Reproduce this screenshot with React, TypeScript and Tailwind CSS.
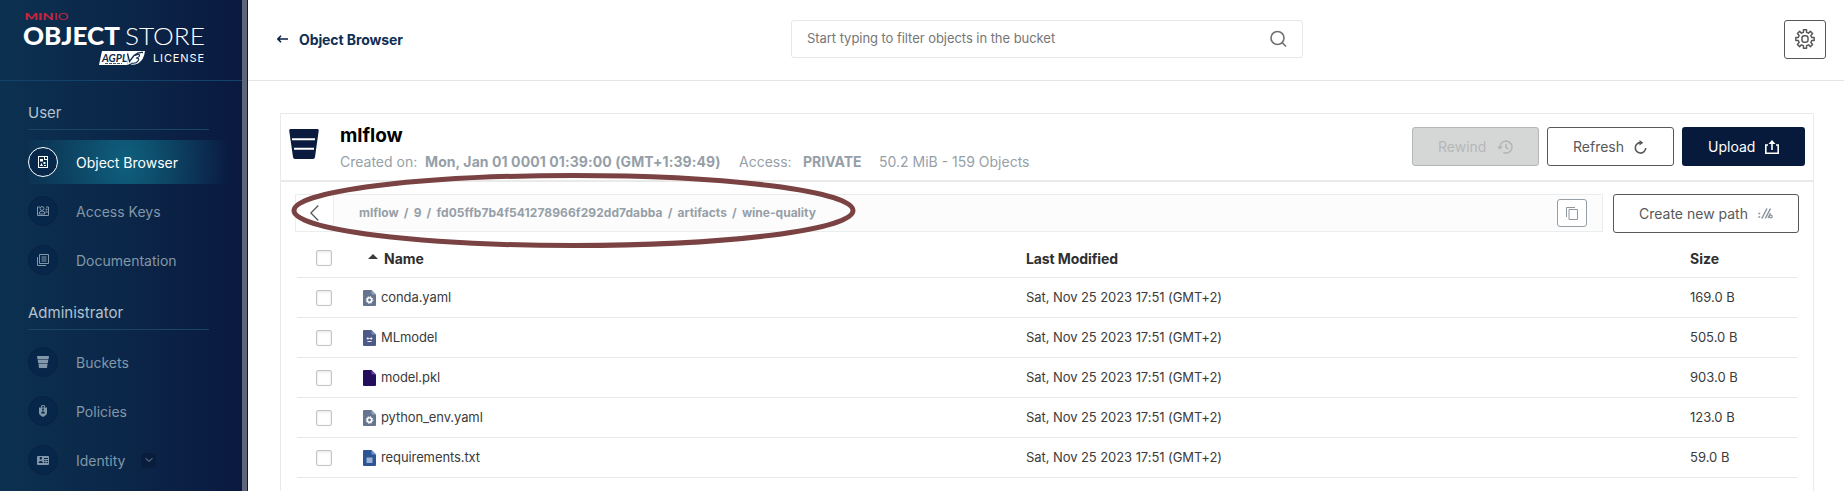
import React from "react";

const Logo = () => (
  <svg width="184" height="56" viewBox="0 0 184 56" className="block overflow-visible" fontFamily="Lato, sans-serif">
    <g fill="#c9243f">
      <text x="0.5" y="7.3" fontSize="10" fontWeight="900" textLength="29" lengthAdjust="spacingAndGlyphs">MIN</text>
      <text x="30" y="7.3" fontSize="10" fontWeight="400" textLength="14.500" lengthAdjust="spacingAndGlyphs">IO</text>
    </g>
    <g fill="#fff">
      <text x="-1" y="32" fontSize="24" fontWeight="900" textLength="97" lengthAdjust="spacingAndGlyphs">OBJECT</text>
      <text x="101" y="32" fontSize="24" fontWeight="300" textLength="80" lengthAdjust="spacingAndGlyphs">STORE</text>
      <path d="M78 38H104L103.500 52H75Z" />
      <path d="M104 38H121q-1 9-7 12.500q-3 1.500-7 1.300l1.500-2.300L103.500 52Z" />
      <text x="129" y="49" fontSize="11" fontFamily="Inter, sans-serif" textLength="51">LICENSE</text>
    </g>
    <text x="78" y="48.5" fontSize="11" fontStyle="italic" fontWeight="700" fill="#0c2a4b" textLength="25" lengthAdjust="spacingAndGlyphs">AGPL</text>
    <g fill="none" stroke="#0c2a4b">
      <path d="M103.500 40.500 105.500 48.500 110 42.500Q114 39 119 39.500" strokeWidth="1.300" />
      <path d="M111 42.500q6-2.500 4 1q-1 1.500-3 1.500q4 0 2 3t-6.500 2" strokeWidth="1.200" />
      <path d="M81 50.500h17" strokeWidth="0.800" strokeDasharray="3 1" />
    </g>
  </svg>
);

const BrowserIcon = () => (
  <svg width="12" height="12" viewBox="0 0 12 12" fill="currentColor">
    <path fillRule="evenodd" d="M1 0h10v12H1ZM2 1v10h8V4H7V1ZM8 1v2h2V1Z" />
    <path d="M3 3h3v2.500H3ZM6.500 6h2v2h-2ZM3 10l1.500-3L6 10ZM7 9h2v1H7Z" />
  </svg>
);
const KeysIcon = () => (
  <svg width="12" height="12" viewBox="0 0 12 12" fill="none" stroke="currentColor">
    <path d="M3 2H.5v8.500h11V2H9" />
    <circle cx="5" cy="3.500" r="1.900" />
    <path d="M2 9q0-3 3-3t3 3Z" />
    <path d="M8.500 4.500h2M8.500 7h2" strokeWidth="1.500" />
  </svg>
);
const DocsIcon = () => (
  <svg width="12" height="12" viewBox="0 0 12 12" fill="none" stroke="currentColor">
    <path d="M2.500.5h9v9h-9ZM.5 3v8.500H9M4.500 3h5M4.500 5h5M4.500 7h5" />
  </svg>
);
const BucketSmallIcon = () => (
  <svg width="12" height="12" viewBox="0 0 12 12" fill="currentColor">
    <path d="M0 0h12l-.4 3H.4ZM.8 4h10.400l-.4 3H1.200ZM1.500 8h9l-.5 4H2Z" />
    <path d="M.5 3h11l-1 5h-9Z" opacity=".45" />
  </svg>
);
const PoliciesIcon = () => (
  <svg width="12" height="12" viewBox="0 0 12 12" fill="currentColor">
    <path fillRule="evenodd" d="M2 2.500h8v5.500q0 2-4 4q-4-2-4-4ZM5.200 3.500v2h1.600v-2ZM4 8.500h4l-1-2H5Z" />
    <path d="M4.500 2.500V.7h3v1.800" fill="none" stroke="currentColor" />
  </svg>
);
const IdentityIcon = () => (
  <svg width="12" height="12" viewBox="0 0 12 12" fill="currentColor">
    <path fillRule="evenodd" d="M1 2h10q1 0 1 1v7q0 1-1 1H1q-1 0-1-1V3q0-1 1-1ZM2.800 3v2.500h2V3ZM1.500 9h4.500q0-2-2.200-2T1.500 9ZM7 4v1h4V4ZM7 6v1h1.500V6ZM9.500 6v1H11V6ZM7 8v1h1.500V8ZM9.500 8v1H11V8Z" />
  </svg>
);

type NavItem = { label: string; icon: React.ReactNode; active?: boolean; expandable?: boolean };

const userItems: NavItem[] = [
  { label: "Object Browser", icon: <BrowserIcon />, active: true },
  { label: "Access Keys", icon: <KeysIcon /> },
  { label: "Documentation", icon: <DocsIcon /> },
];
const adminItems: NavItem[] = [
  { label: "Buckets", icon: <BucketSmallIcon /> },
  { label: "Policies", icon: <PoliciesIcon /> },
  { label: "Identity", icon: <IdentityIcon />, expandable: true },
];

const NavGroup = ({ title, items }: { title: string; items: NavItem[] }) => (
  <div>
    <div className="mr-[33px] ml-7 flex h-[27px] items-start border-b border-[#194466] text-[15px] leading-5 text-[#b3c3cf]">
      {title}
    </div>
    <div className="flex flex-col gap-[5px] pt-[10px]">
      {items.map((item) => (
        <div
          key={item.label}
          className={
            item.active
              ? "mr-2 ml-7 flex h-11 items-center bg-[radial-gradient(ellipse_104px_140px_at_97px_22px,#0f607e_0%,#0f607e00_100%)] text-white"
              : "mr-2 ml-7 flex h-11 items-center text-[#8297a8]"
          }
        >
          <span
            className={
              item.active
                ? "flex size-[30px] items-center justify-center rounded-full border border-white bg-[#07274b]"
                : "flex size-[30px] items-center justify-center rounded-full border border-[#08233f] bg-[#06264a]"
            }
          >
            {item.icon}
          </span>
          <span className="ml-[18px] pt-px text-[14px]">{item.label}</span>
          {item.expandable && (
            <span className="ml-4 flex size-[15px] items-center justify-center rounded-sm bg-[#0a1d3d]">
              <svg width="8" height="6" viewBox="0 0 8 6" fill="none" stroke="currentColor">
                <path d="M.7 1.200 4 4.500l3.300-3.300" />
              </svg>
            </span>
          )}
        </div>
      ))}
    </div>
  </div>
);

const Sidebar = () => (
  <aside className="flex w-[248px] shrink-0 border-r border-[#081c42] bg-[#0b1b40]">
    <div className="w-[242px] bg-[linear-gradient(90deg,#0c3150_0%,#0b2648_52%,#0a193f_100%)]">
      <div className="h-[81px] border-b border-[#13436b] pt-[13px] pl-6">
        <Logo />
      </div>
      <div className="flex flex-col gap-[21px] pt-[22px]">
        <NavGroup title="User" items={userItems} />
        <NavGroup title="Administrator" items={adminItems} />
      </div>
    </div>
    <div className="w-[5px] bg-[#5e657a]" />
  </aside>
);

const SearchIcon = () => (
  <svg width="17" height="18" viewBox="0 0 17 18" fill="none" stroke="#707070" strokeWidth="1.600">
    <circle cx="7.500" cy="8" r="6.500" />
    <path d="m12 12.500 4 4" />
  </svg>
);

const GearIcon = () => (
  <svg width="22" height="22" viewBox="0 0 24 24" fill="none" stroke="#585858" strokeWidth="1.600" strokeLinejoin="round">
    <path d="M10.300 2h3.400v2.700l2.200.9 2-1.900 2.400 2.400-1.900 2 .9 2.200H22v3.400h-2.700l-.9 2.200 1.900 2-2.400 2.400-2-1.900-2.200.9V22h-3.400v-2.700l-2.200-.9-2 1.900-2.400-2.400 1.900-2-.9-2.200H2v-3.400h2.700l.9-2.200-1.900-2 2.400-2.400 2 1.900 2.200-.9Z" />
    <rect x="8.700" y="8.500" width="6.600" height="7" rx="2.500" />
  </svg>
);

const Header = () => (
  <header className="flex h-[81px] shrink-0 items-center border-b border-[#e5e5e5] pr-[18px] pl-[29px]">
    <div className="mb-[2px] flex w-[514px] items-center">
      <svg width="11" height="8" viewBox="0 0 11 8" fill="none" stroke="#081c42" strokeWidth="1.500">
        <path d="M11 4H1.500M4 .8.900 4 4 7.200" />
      </svg>
      <span className="ml-[11px] text-[14px] font-bold tracking-[-0.1px] text-[#0f2f55]">Object Browser</span>
    </div>
    <div className="mb-[2px] flex h-[38px] w-[512px] items-center justify-between rounded-[3px] border border-[#e5e8e8] pr-[15px] pl-[15px] text-[13px] tracking-[-0.05px] text-[#767676]">
      <span>Start typing to filter objects in the bucket</span>
      <SearchIcon />
    </div>
    <button className="mb-[2px] ml-auto flex h-[39px] w-[42px] items-center justify-center rounded-[3px] border border-[#585858]">
      <GearIcon />
    </button>
  </header>
);

const BucketIcon = () => (
  <svg width="30" height="30" viewBox="0 0 30 30">
    <path d="M1.500 0h27q1.500 0 1.200 1.700L26 28q-.3 2-2 2H6q-1.700 0-2-2L.2 1.700Q0 0 1.500 0Z" fill="#0a1b3f" />
    <path d="M3 10.300h23M5 19.800h20" stroke="#fff" strokeWidth="2" />
  </svg>
);
const RewindIcon = () => (
  <svg width="16" height="14" viewBox="0 0 16 14" fill="none" stroke="currentColor" strokeWidth="1.600">
    <path d="M3 7.500A6 6 0 1 1 6.200 12.400M9 4v3.500l2.500 1.500" />
    <path d="M0 6.500h6L3 9.700Z" fill="currentColor" stroke="none" />
  </svg>
);
const RefreshIcon = () => (
  <svg width="13" height="14" viewBox="0 0 13 14" fill="none" stroke="currentColor" strokeWidth="1.600">
    <path d="M7 2.700A5.200 5.200 0 1 0 11.700 8" />
    <path d="M5.500 0 9.300 2.800 5.500 5.600Z" fill="currentColor" stroke="none" />
  </svg>
);
const UploadIcon = () => (
  <svg width="14" height="14" viewBox="0 0 14 14" fill="none" stroke="currentColor" strokeWidth="1.600">
    <path d="M3 5H.8v8.200h12.400V5H11M7 10V2" />
    <path d="M3.500 4 7 0l3.500 4Z" fill="currentColor" stroke="none" />
  </svg>
);
const PathIcon = () => (
  <svg width="15" height="11" viewBox="0 0 15 11" fill="none" stroke="#8b949c" strokeWidth="1.500">
    <path d="M.3 5.500h1.900M.3 9h1.900M3.800 10.500 9 .5M7.300 10.500 12.500 .5" />
    <path d="M10 10 12.500 5" strokeWidth="1.200" />
    <circle cx="12.800" cy="8.500" r="1.400" strokeWidth="1.200" />
  </svg>
);
const CopyIcon = () => (
  <svg width="12" height="13" viewBox="0 0 12 13" fill="none" stroke="#8f979f">
    <path d="M.5 10V.5H9M3 2.500h8.500v10H3Z" />
  </svg>
);

const FileIcon = ({ kind }: { kind: string }) => {
  const fill = kind === "yaml" ? "#65758f" : kind === "model" ? "#4d5a87" : kind === "pkl" ? "#230f5c" : "#2c5594";
  const fold = kind === "yaml" ? "#8fa4bd" : kind === "model" ? "#7c8bc2" : kind === "pkl" ? "#6845a5" : "#6f98d3";
  return (
    <svg width="13" height="16" viewBox="0 0 13 16">
      <path d="M1 0h7.500L13 4.500V15q0 1-1 1H1q-1 0-1-1V1q0-1 1-1Z" fill={fill} />
      <path d="M8.500 0 13 4.500H9.500q-1 0-1-1Z" fill={fold} />
      {kind === "yaml" && (
        <g stroke="#fff" fill="none">
          <circle cx="6.500" cy="10" r="2.200" strokeWidth="1.600" />
          <circle cx="6.500" cy="10" r="3.400" strokeWidth="1" strokeDasharray="1.400 1.270" />
        </g>
      )}
      {kind === "model" && (
        <path d="M4 7.500h1.500v2H4ZM7.500 7.500H9v2H7.500ZM3.500 8h6v.8h-6ZM4.500 11h4v1h-4Z" fill="#fff" opacity=".9" />
      )}
      {kind === "txt" && <path d="M3.500 7.500h6V13h-6Z" fill="#9bb1d5" />}
    </svg>
  );
};

const Checkbox = () => (
  <span className="block size-4 rounded-[2px] border border-[#c3c3c3] bg-white shadow-[inset_0_1px_3px_#0000001a]" />
);

const files = [
  { name: "conda.yaml", kind: "yaml", size: "169.0 B" },
  { name: "MLmodel", kind: "model", size: "505.0 B" },
  { name: "model.pkl", kind: "pkl", size: "903.0 B" },
  { name: "python_env.yaml", kind: "yaml", size: "123.0 B" },
  { name: "requirements.txt", kind: "txt", size: "59.0 B" },
];

const crumbs = ["mlflow", "9", "fd05ffb7b4f541278966f292dd7dabba", "artifacts", "wine-quality"];

const BucketHeader = () => (
  <div className="flex h-[68px] items-start border-b-2 border-[#eaeaea] pr-2 pl-2">
    <div className="pt-[15px]">
      <BucketIcon />
    </div>
    <div className="ml-[21px] flex flex-col pt-2">
      <h1 className="h-[30px] text-[19px] leading-[27px] font-bold text-black">mlflow</h1>
      <div className="flex h-5 items-center text-[14px] leading-5 whitespace-nowrap text-[#969fa8]">
        <span className="w-[85px]">Created on:</span>
        <b className="w-[314px] tracking-[0.09px]">Mon, Jan 01 0001 01:39:00 (GMT+1:39:49)</b>
        <span className="w-[64px]">Access:</span>
        <b className="w-[76px]">PRIVATE</b>
        <span>50.2 MiB - 159 Objects</span>
      </div>
    </div>
    <div className="ml-auto flex gap-2 pt-[13px] text-[14px]">
      <button className="flex h-[39px] w-[127px] items-center justify-between rounded-[3px] border border-[#b5b6b6] bg-[#d5d7d7] pr-[25px] pl-[25px] text-[#b5b7b7]">
        Rewind <RewindIcon />
      </button>
      <button className="flex h-[39px] w-[127px] items-center justify-between rounded-[3px] border border-[#585858] pr-[26px] pl-[25px] text-[#585858]">
        Refresh <RefreshIcon />
      </button>
      <button className="flex h-[39px] w-[123px] items-center justify-between rounded-[3px] bg-[#081a3c] pr-[26px] pl-[26px] text-white">
        Upload <UploadIcon />
      </button>
    </div>
  </div>
);

const PathBar = () => (
  <div className="flex pt-3 pr-[14px] pl-[14px]">
    <div className="flex h-[38px] w-[1308px] items-center border border-[#eaedee] bg-[#fcfcfc]">
      <span className="flex h-full w-[38px] items-center justify-center border-r border-[#eaedee] bg-white">
        <svg width="9" height="16" viewBox="0 0 9 16" fill="none" stroke="#585858" strokeWidth="1.300">
          <path d="M8.300.5.900 8l7.400 7.500" />
        </svg>
      </span>
      <div className="ml-[25px] flex text-[12px] font-bold text-[#969fa8]">
        {crumbs.map((c, i) => (
          <React.Fragment key={c}>
            {i > 0 && <span className="w-[15px] text-center">/</span>}
            <span className={c.length > 20 ? "tracking-[0.07px]" : ""}>{c}</span>
          </React.Fragment>
        ))}
      </div>
      <button className="mr-[15px] ml-auto flex h-7 w-[30px] items-center justify-center rounded-[3px] border border-[#969fa8] bg-white">
        <CopyIcon />
      </button>
    </div>
    <button className="ml-[10px] flex h-[39px] w-[186px] items-center justify-between rounded-[3px] border border-[#585858] pr-[25px] pl-[25px] text-[14px] text-[#585858]">
      Create new path <PathIcon />
    </button>
  </div>
);

const FileTable = () => (
  <div className="mr-4 ml-4 text-[#3b3b3b]">
    <div className="flex h-[45px] items-center border-b border-[#e7e9e9] pt-[6px] text-[14px] font-bold text-[#2f2f2f]">
      <div className="w-[71px] pl-[19px]"><Checkbox /></div>
      <div className="flex w-[658px] items-center gap-[6px]">
        <svg width="10" height="5" viewBox="0 0 10 5" className="mb-[3px]"><path d="M0 5 5 0l5 5Z" fill="#3b3b3b" /></svg>
        Name
      </div>
      <div className="w-[664px] tracking-[-0.1px]">Last Modified</div>
      <div>Size</div>
    </div>
    {files.map((f) => (
      <div key={f.name} className="flex h-10 items-center border-b border-[#e7e9e9] text-[13px]">
        <div className="w-[66px] pl-[19px]"><Checkbox /></div>
        <div className="flex w-[663px] items-center gap-[5px] tracking-[-0.1px]">
          <FileIcon kind={f.kind} />
          {f.name}
        </div>
        <div className="w-[664px] tracking-[-0.07px]">Sat, Nov 25 2023 17:51 (GMT+2)</div>
        <div>{f.size}</div>
      </div>
    ))}
  </div>
);

export default function App() {
  return (
    <div className="relative flex h-[491px] w-[1844px] overflow-hidden bg-white font-[Inter,sans-serif]">
      <Sidebar />
      <main className="flex min-w-0 flex-1 flex-col">
        <Header />
        <section className="mt-8 mr-[30px] ml-8 h-[400px] shrink-0 border border-[#eaeaea]">
          <BucketHeader />
          <PathBar />
          <FileTable />
        </section>
      </main>
      <svg className="pointer-events-none absolute top-[168px] left-[288px]" width="572" height="86" fill="none">
        <ellipse cx="285.500" cy="42.500" rx="279.500" ry="35" stroke="#7a4242" strokeWidth="5" />
      </svg>
    </div>
  );
}
